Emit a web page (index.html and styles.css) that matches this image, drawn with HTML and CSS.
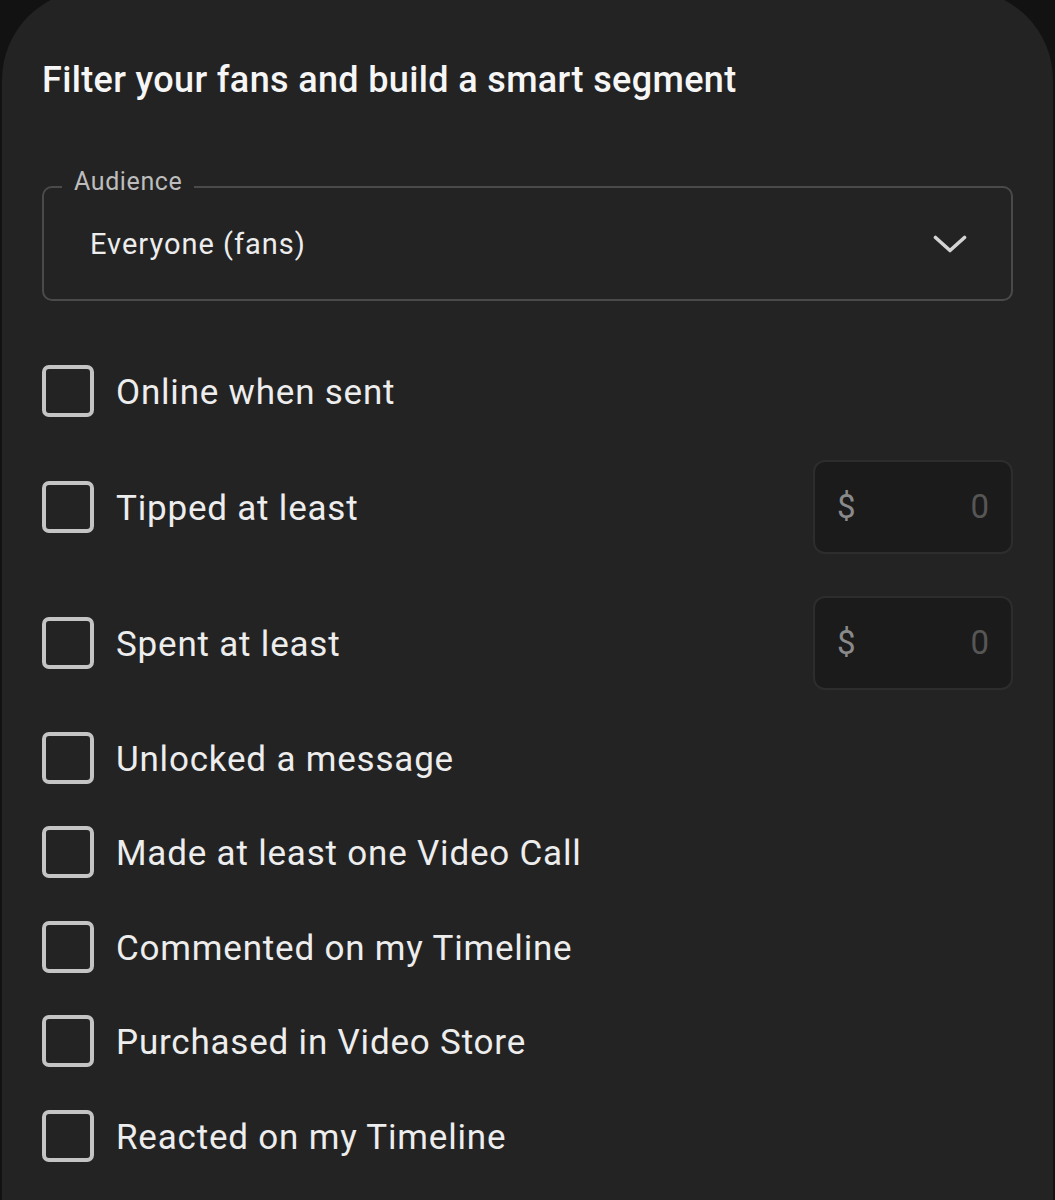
FILE: index.html
```html
<!DOCTYPE html>
<html lang="en">
<head>
    <meta charset="UTF-8">
    <meta name="viewport" content="width=device-width, initial-scale=1.0">
    <title>Smart Segment</title>
    <link rel="stylesheet" href="styles.css">
</head>
<body>

    <section class="sheet" aria-labelledby="sheetTitle">
        <h2 class="sheet__title" id="sheetTitle">Filter your fans and build a smart segment</h2>

        <div class="select">
            <span class="select__label">Audience</span>
            <span class="select__value">Everyone (fans)</span>
            <svg class="select__chevron" width="34" height="18" viewBox="0 0 34 18" aria-hidden="true">
                <path d="M2.5 2.5 L17 15.5 L31.5 2.5" fill="none" stroke="currentColor" stroke-width="3.6" stroke-linecap="round" stroke-linejoin="round"/>
            </svg>
        </div>

        <ul class="filters">
            <li class="filter">
                <label class="filter__check"><input type="checkbox"><span class="box"></span><span class="filter__text">Online when sent</span></label>
            </li>
            <li class="filter filter--amount">
                <label class="filter__check"><input type="checkbox"><span class="box"></span><span class="filter__text">Tipped at least</span></label>
                <div class="amount"><span class="amount__sign">$</span><span class="amount__value">0</span></div>
            </li>
            <li class="filter filter--amount">
                <label class="filter__check"><input type="checkbox"><span class="box"></span><span class="filter__text">Spent at least</span></label>
                <div class="amount"><span class="amount__sign">$</span><span class="amount__value">0</span></div>
            </li>
            <li class="filter">
                <label class="filter__check"><input type="checkbox"><span class="box"></span><span class="filter__text">Unlocked a message</span></label>
            </li>
            <li class="filter">
                <label class="filter__check"><input type="checkbox"><span class="box"></span><span class="filter__text">Made at least one Video Call</span></label>
            </li>
            <li class="filter">
                <label class="filter__check"><input type="checkbox"><span class="box"></span><span class="filter__text">Commented on my Timeline</span></label>
            </li>
            <li class="filter">
                <label class="filter__check"><input type="checkbox"><span class="box"></span><span class="filter__text">Purchased in Video Store</span></label>
            </li>
            <li class="filter">
                <label class="filter__check"><input type="checkbox"><span class="box"></span><span class="filter__text">Reacted on my Timeline</span></label>
            </li>
        </ul>
    </section>

</body>
</html>
```

FILE: styles.css
```css
/* Dark bottom-sheet theme */
:root {
    --color-page: #121212;
    --color-sheet: #232323;
    --color-text: #ededed;
    --color-label: #bdbdbd;
    --color-outline: #4a4a4a;
    --color-box: #c4c4c4;
    --color-input-bg: #1b1b1b;
    --color-input-border: #2d2d2d;

    --font-family: Roboto, "Noto Sans", "Liberation Sans", sans-serif;
    --sheet-padding: 40px;
}

*,
*::before,
*::after {
    box-sizing: border-box;
}

body {
    margin: 0;
    font-family: var(--font-family);
    color: var(--color-text);
    background: var(--color-page);
    overflow: hidden;
}

ul { list-style: none; margin: 0; padding: 0; }

.sheet {
    margin: -10px 2px 0;
    min-height: 1230px;
    padding: 70px var(--sheet-padding) 0;
    background: var(--color-sheet);
    border-radius: 90px 90px 0 0;
}

.sheet__title {
    margin: 0;
    font-size: 36px;
    line-height: 40px;
    font-weight: 500;
    letter-spacing: 0.35px;
    color: #f6f6f6;
}

/* Outlined select with a notched label */
.select {
    position: relative;
    display: flex;
    align-items: center;
    justify-content: space-between;
    height: 115px;
    margin-top: 86px;
    padding: 0 44px 0 46px;
    border: 2px solid var(--color-outline);
    border-radius: 10px;
}

.select__label {
    position: absolute;
    top: -19px;
    left: 18px;
    padding: 0 12px;
    font-size: 25px;
    line-height: 25px;
    letter-spacing: 0.6px;
    color: var(--color-label);
    background: var(--color-sheet);
}

.select__value {
    font-size: 29px;
    letter-spacing: 1px;
}

.select__chevron {
    color: #d4d4d4;
}

/* Checkbox filters */
.filters {
    margin-top: 43px;
}

.filter {
    display: flex;
    align-items: center;
    justify-content: space-between;
    min-height: 94.5px;
}

.filter--amount {
    padding: 21px 0;
}

.filter__check {
    display: flex;
    align-items: center;
    gap: 22px;
    font-size: 35px;
    letter-spacing: 0.8px;
    color: var(--color-text);
    cursor: pointer;
}

/* the label glyphs sit a touch below the box centre */
.filter__text {
    padding-top: 3px;
}

.filter__check input {
    position: absolute;
    opacity: 0;
    pointer-events: none;
}

.box {
    width: 52px;
    height: 52px;
    border: 4px solid var(--color-box);
    border-radius: 7px;
}

/* Amount input beside tipped / spent */
.amount {
    display: flex;
    align-items: center;
    justify-content: space-between;
    width: 200px;
    height: 94px;
    padding: 0 22px;
    background: var(--color-input-bg);
    border: 2px solid var(--color-input-border);
    border-radius: 12px;
    font-size: 33px;
}

.amount__sign { color: #8a8a8a; }
.amount__value { color: #565656; }
```
